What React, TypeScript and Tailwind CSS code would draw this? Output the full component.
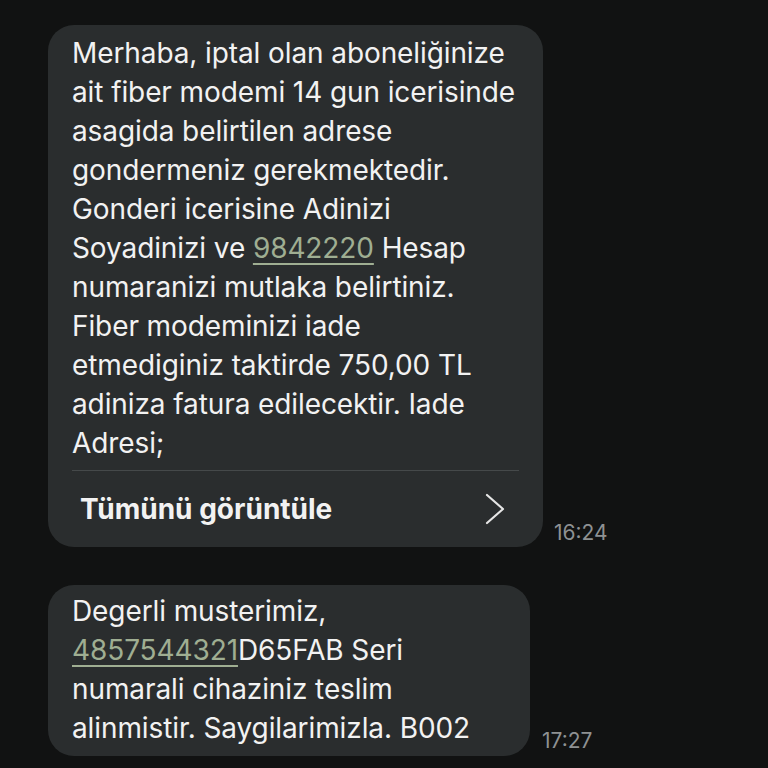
function Link({children}: {children: React.ReactNode}) {
    return <span className="text-[#9fae92] underline decoration-2 underline-offset-[5px]">{children}</span>;
}

export default function App() {
    return (
        <div className="w-[768px] h-[768px] bg-[#111212] overflow-hidden font-['Inter',sans-serif] text-white">
            <div className="flex items-end pl-[48px] pt-[25px]">
                <div className="w-[495px] rounded-[26px] bg-[#2a2d2e] px-[24px] pt-[9px]">
                    <p className="text-[28px] leading-[39px] tracking-[-0.1px] text-[#f2f2f2]">
                        Merhaba, iptal olan aboneliğinize<br/>
                        ait fiber modemi 14 gun icerisinde<br/>
                        asagida belirtilen adrese<br/>
                        gondermeniz gerekmektedir.<br/>
                        Gonderi icerisine Adinizi<br/>
                        Soyadinizi ve <Link>9842220</Link> Hesap<br/>
                        numaranizi mutlaka belirtiniz.<br/>
                        Fiber modeminizi iade<br/>
                        etmediginiz taktirde 750,00 TL<br/>
                        adiniza fatura edilecektir. Iade<br/>
                        Adresi;
                    </p>
                    <div className="mt-[7px] h-px bg-[#45494a]"/>
                    <div className="flex items-center justify-between pl-[8px] pr-[14px] h-[76px]">
                        <span className="text-[28px] font-bold text-[#f2f2f2]">Tümünü görüntüle</span>
                        <svg width="20" height="32" viewBox="0 0 20 32" fill="none">
                            <polyline points="2,2 18,16 2,30" stroke="#e6e6e6" strokeWidth="2.2"
                                      strokeLinecap="round" strokeLinejoin="round"/>
                        </svg>
                    </div>
                </div>
                <span className="ml-[11px] mb-[-1px] text-[21px] text-[#8e9192]">16:24</span>
            </div>

            <div className="flex items-end pl-[48px] pt-[38px]">
                <div className="w-[482px] rounded-[26px] bg-[#2a2d2e] px-[24px] pt-[7px] pb-[8px]">
                    <p className="text-[28px] leading-[39px] tracking-[-0.1px] text-[#f2f2f2]">
                        Degerli musterimiz,<br/>
                        <Link>4857544321</Link>D65FAB Seri<br/>
                        numarali cihaziniz teslim<br/>
                        alinmistir. Saygilarimizla. B002
                    </p>
                </div>
                <span className="ml-[12px] mb-[0px] text-[21px] text-[#8e9192]">17:27</span>
            </div>
        </div>
    );
}
